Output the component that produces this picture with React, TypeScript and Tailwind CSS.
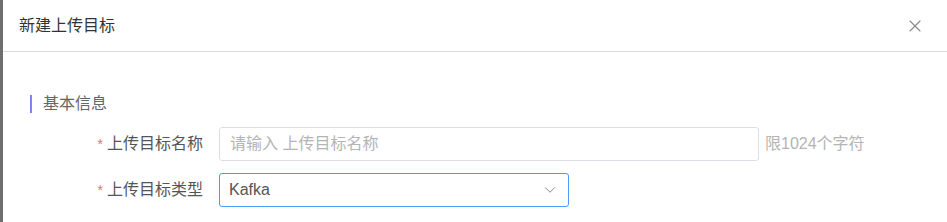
import { ChevronDown, X } from 'lucide-react'

const font = { fontFamily: '"Liberation Sans", "Noto Sans CJK SC", sans-serif' }

export default function App() {
    return (
        <div className="flex w-[947px] h-[222px] overflow-hidden bg-[#6f6f6f]" style={font}>
            {/* Dialog */}
            <div className="ml-[3px] flex-1 bg-white flex flex-col">
                {/* Header */}
                <div className="h-[52px] flex items-center justify-between pl-[16px] pr-[22px] border-b border-[#dcdcdc]">
                    <span className="text-[16px] text-[#333]">新建上传目标</span>
                    <X className="w-[20px] h-[20px] text-[#888]" strokeWidth={1.3} />
                </div>

                {/* Body */}
                <div className="pt-[42px]">
                    <div className="flex items-center h-[19px] pl-[27px]">
                        <span className="w-[2px] h-[18px] bg-[#7b84f2]" />
                        <span className="ml-[11px] text-[16px] text-[#666]">基本信息</span>
                    </div>

                    <div className="mt-[14px] flex items-center h-[34px]">
                        <label className="w-[200px] flex justify-end items-center text-[16px] text-[#555]">
                            <span className="text-[#f56c6c] mr-[4px] text-[14px]">*</span>
                            上传目标名称
                        </label>
                        <div className="ml-[16px] w-[540px] h-[34px] border border-[#dcdfe6] rounded-[3px] flex items-center px-[10px]">
                            <span className="text-[16px] text-[#b4b4b4]">请输入 上传目标名称</span>
                        </div>
                        <span className="ml-[6px] text-[16px] text-[#b4b4b4]">限1024个字符</span>
                    </div>

                    <div className="mt-[12px] flex items-center h-[34px]">
                        <label className="w-[200px] flex justify-end items-center text-[16px] text-[#555]">
                            <span className="text-[#f56c6c] mr-[4px] text-[14px]">*</span>
                            上传目标类型
                        </label>
                        <div className="ml-[16px] w-[350px] h-[34px] border border-[#4a9cf4] rounded-[3px] flex items-center justify-between pl-[9px] pr-[9px]">
                            <span className="text-[16px] text-[#555]">Kafka</span>
                            <ChevronDown className="w-[18px] h-[18px] text-[#888]" strokeWidth={1.3} />
                        </div>
                    </div>
                </div>
            </div>
        </div>
    )
}
